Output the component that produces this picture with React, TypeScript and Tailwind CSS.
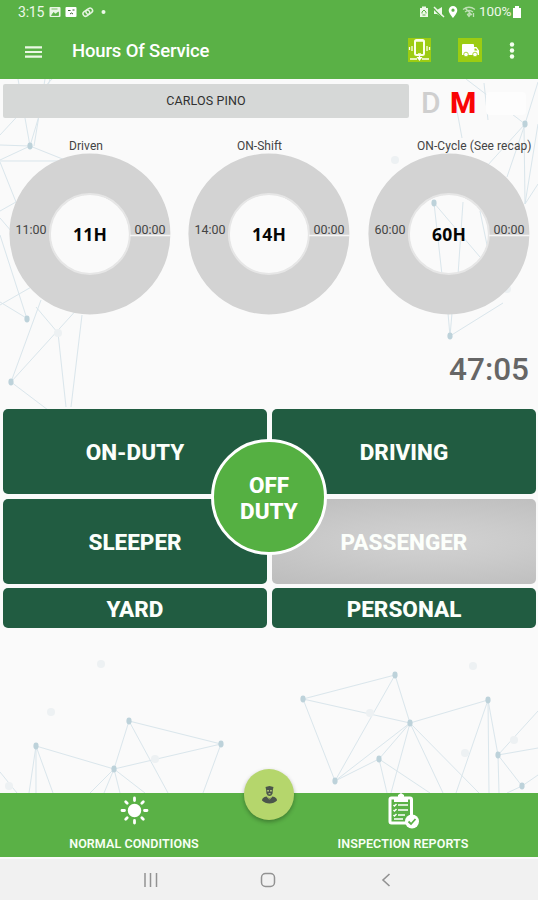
import React from "react";

type Point = [number, number];

const nodes: Point[] = [
  [30, 146], [27, 319], [11, 382], [36, 746], [129, 721], [221, 744], [114, 769],
  [303, 699], [395, 675], [410, 723], [488, 700], [335, 781], [379, 759], [498, 755],
  [522, 786], [434, 203], [450, 336], [525, 124],
];
const faintNodes: Point[] = [
  [58, 333], [51, 712], [101, 664], [155, 759], [370, 713], [473, 666], [514, 740],
  [395, 160], [507, 289], [465, 753], [9, 786],
];
const lines: [number, number, number, number][] = [
  [18, 79, 30, 146], [50, 79, 30, 146], [0, 145, 30, 146], [0, 160, 30, 146],
  [30, 146, 80, 166], [0, 161, 62, 161], [0, 162, 16, 202], [16, 202, 0, 211],
  [0, 218, 12, 232], [0, 235, 27, 319], [0, 305, 40, 282], [0, 302, 28, 319],
  [41, 300, 11, 382], [80, 306, 11, 382], [11, 382, 48, 410], [58, 333, 66, 407],
  [82, 315, 71, 407], [36, 307, 58, 333], [45, 79, 34, 146], [52, 79, 0, 135],
  [36, 746, 114, 769], [36, 746, 36, 793], [36, 746, 29, 793], [36, 746, 53, 793],
  [129, 721, 221, 744], [129, 721, 114, 769], [129, 721, 168, 793],
  [221, 744, 114, 769], [221, 744, 203, 793], [114, 769, 90, 793],
  [114, 769, 104, 793], [114, 769, 120, 793], [114, 769, 145, 793], [0, 772, 17, 793],
  [303, 699, 395, 675], [303, 699, 410, 723], [303, 699, 335, 781],
  [395, 675, 410, 723], [395, 675, 335, 781], [410, 723, 488, 700],
  [410, 723, 335, 781], [410, 723, 379, 759], [379, 759, 335, 781],
  [379, 759, 430, 793], [379, 759, 387, 793], [410, 723, 391, 793],
  [410, 723, 443, 793], [410, 723, 479, 793], [488, 700, 456, 793],
  [488, 700, 489, 793], [488, 700, 498, 755], [498, 755, 538, 711],
  [498, 755, 538, 748], [498, 755, 522, 786], [498, 755, 499, 793],
  [522, 786, 538, 775], [522, 786, 507, 793], [434, 203, 480, 257],
  [434, 203, 442, 275], [463, 202, 458, 275], [480, 211, 487, 245],
  [448, 313, 450, 336], [452, 313, 450, 336], [450, 336, 503, 303],
  [538, 124, 525, 204], [538, 184, 525, 204], [524, 125, 525, 204],
  [525, 124, 466, 79], [525, 124, 538, 82], [525, 124, 487, 166],
  [525, 124, 507, 177], [484, 83, 488, 120], [455, 100, 462, 138],
];

function Backdrop() {
  return (
    <svg className="absolute inset-0 h-full w-full" viewBox="0 79 538 714" fill="none" aria-hidden="true">
      <g stroke="#c5d9e3" strokeWidth="1" opacity=".6">
        {lines.map(([a, b, c, d], i) => <path key={i} d={`M${a} ${b}L${c} ${d}`} />)}
      </g>
      <g fill="#bdd2da">
        {nodes.map(([x, y], i) => <ellipse key={i} cx={x} cy={y} rx="2.6" ry="3.4" />)}
      </g>
      <g fill="#edf1f3">
        {faintNodes.map(([x, y], i) => <circle key={i} cx={x} cy={y} r="4" />)}
      </g>
    </svg>
  );
}

function Gauge({ label, start, hours, labelX, labelWidth }: {
  label: string; start: string; hours: string; labelX: number; labelWidth: number;
}) {
  return (
    <svg className="h-[184px] w-full overflow-visible" viewBox="0 0 179.33 184" fontFamily="Roboto, sans-serif">
      <text x={labelX} y="19.5" fontSize="12" fill="#444" textLength={labelWidth}>{label}</text>
      <circle cx="89.9" cy="103" r="60" fill="none" stroke="#d3d3d3" strokeWidth="41" />
      <circle cx="89.9" cy="103" r="40" fill="none" stroke="#e6e6e6" strokeWidth="2" />
      <path d="M130 104.5h41" stroke="#f5f5f5" strokeWidth="1.5" />
      <text x="15.5" y="103" fontSize="12.5" fill="#444" textLength="31">{start}</text>
      <text x="134.5" y="103" fontSize="12.5" fill="#444" textLength="31">00:00</text>
      <text x="73" y="110" fontFamily="Open Sans, sans-serif" fontSize="17.5" fontWeight="700" fill="#050505" textLength="34">{hours}</text>
    </svg>
  );
}

function DutyButton({ children, disabled = false }: { children: React.ReactNode; disabled?: boolean }) {
  return (
    <button
      className={`flex items-center justify-center rounded-[5px] pt-[2px] text-[22.5px] leading-none font-extrabold text-[#fcfffb] ${
        disabled ? "bg-[radial-gradient(ellipse_90%_60%_at_60%_50%,#d2d2d2_0%,#cbcbcb_40%,#bebebe_100%)]" : "bg-[#215c41]"
      }`}
    >
      {children}
    </button>
  );
}

function StatusBar() {
  return (
    <div className="flex h-6 items-center justify-between pr-[17px] pl-[18px] text-[14px] leading-none text-[#edf8e9]">
      <div className="flex items-center">
        <span className="w-[31px] tracking-[-0.2px]">3:15</span>
        <svg className="h-3 w-[60px]" viewBox="0 0 60 12" fill="none">
          <rect x="0.500" y="1" width="11" height="10" rx="1" fill="#e9f5e5" />
          <path d="M2.500 3h6M2.500 9.500l2-3 2 1.500 3-2v3.500z" stroke="#5ab146" fill="#5ab146" strokeWidth=".8" />
          <rect x="16.500" y="1" width="11" height="10" rx="1" fill="#fff" />
          <path d="M19 4.500h2.500M23.500 4h2M21 8l1.500-1 1.500 1" stroke="#35612a" />
          <g stroke="#e4f3df" strokeWidth="1.5" transform="rotate(-35 39 6)">
            <rect x="33.5" y="3.5" width="7" height="5" rx="2.5" />
            <rect x="37" y="3.5" width="7" height="5" rx="2.5" />
          </g>
          <circle cx="54.5" cy="6" r="2" fill="#edf8e9" />
        </svg>
      </div>
      <div className="flex items-center">
        <svg className="mr-[3px] h-3 w-[57px]" viewBox="0 0 57 12" fill="none">
          <path d="M1 2h2V.5h4V2h2v9H1z" fill="#edf8e9" />
          <path d="M3 7.500V6l2-2 2 2v1.500M3.500 9h3" stroke="#5ab146" />
          <path d="M15 4h3l5-3v10l-5-3h-3z" fill="#edf8e9" />
          <path d="m14 2 9 9" stroke="#5ab146" strokeWidth="1.500" />
          <path d="m15 1 10 10" stroke="#edf8e9" strokeWidth="1.500" />
          <path fillRule="evenodd" d="M34 0a4.300 4.300 0 0 0-4.300 4.300c0 3 4.300 7.700 4.300 7.700s4.300-4.700 4.300-7.700A4.300 4.300 0 0 0 34 0m0 2.600a1.600 1.600 0 1 1 0 3.200 1.600 1.600 0 0 1 0-3.200" fill="#fff" />
          <path d="M44 3.500q6-4.500 12 0M46 6q4-3 8 0M48.500 8.500q1.500-1.500 3 0L50 10.500zM46 2l7 7M54.500 7v4" stroke="#bfe0b6" strokeWidth="1.300" />
        </svg>
        <span className="w-[34px] text-[13.5px] tracking-[-0.1px]">100%</span>
        <svg className="h-3 w-2" viewBox="0 0 8 12"><path fill="#fff" d="M0 2h2V0h4v2h2v10H0z" /></svg>
      </div>
    </div>
  );
}

export default function App() {
  return (
    <div className="flex h-[900px] w-[538px] flex-col overflow-hidden bg-[#fafafa] font-[Roboto,sans-serif]">
      <header className="h-[79px] shrink-0 bg-[#5ab146] text-white">
        <StatusBar />
        <div className="flex h-[55px] items-center pr-6 pl-[25px]">
          <svg className="h-3 w-[17px]" viewBox="0 0 17 12"><path d="M0 1.3h17M0 6h17M0 10.7h17" stroke="#eaf8e4" strokeWidth="2.2" /></svg>
          <h1 className="ml-[30px] text-[18.5px] leading-none font-medium tracking-[-0.15px]">Hours Of Service</h1>
          <div className="ml-auto flex items-center pb-1">
            <svg className="h-6 w-[23px] bg-[#9ccc12]" viewBox="0 0 23 24" fill="none">
              <rect x="7" y="2" width="9" height="15" rx="1.5" stroke="#fbffe9" strokeWidth="2" />
              <path d="M8 3h7M10 16h3M4 8v5M19 8v5M1.5 9v3M21.5 9v3M2 21h7M14 21h7M11.5 17v4" stroke="#fbffe9" strokeWidth="1.3" />
              <path d="m8.5 19 3 4 3-4z" fill="#fff" />
            </svg>
            <svg className="ml-[27px] h-6 w-6 bg-[#9ccc12]" viewBox="0 0 24 24">
              <path d="M5 6h10a1 1 0 0 1 1 1v2h2.500l2.500 3.500V17H4V7a1 1 0 0 1 1-1" fill="#fff" />
              <path d="M16.500 10.500v2h3l-1.500-2z" fill="#9ccc12" />
              <g fill="#fff" stroke="#9ccc12" strokeWidth=".8"><circle cx="8" cy="16.500" r="2.300" /><circle cx="17" cy="16.500" r="2.300" /></g>
            </svg>
            <svg className="ml-7 h-4 w-1 overflow-visible" viewBox="0 0 4 16" fill="#f4fff0"><circle cx="2" cy="2.500" r="2.200" /><circle cx="2" cy="8.500" r="2.200" /><circle cx="2" cy="14.500" r="2.200" /></svg>
          </div>
        </div>
      </header>

      <main className="relative h-[714px] shrink-0">
        <Backdrop />
        <div className="relative flex h-full flex-col">
          <div className="flex h-[52px] items-start pt-[5px] pl-[3px]">
            <div className="flex h-[34px] w-[406px] items-center justify-center rounded-[2px] bg-[#d6d8d7] text-[12.5px] tracking-[0.1px] text-[#303030]">CARLOS PINO</div>
            <div className="flex h-[34px] items-center pt-1 pl-3 text-[30px] leading-none font-bold">
              <span className="w-[29px] font-medium text-[#cfcfcf]">D</span>
              <span className="w-[36px] font-extrabold text-[#f90505]">M</span>
              <span className="h-[23px] w-[40px] rounded bg-[#fdfdfd]" />
            </div>
          </div>
          <section className="grid h-[184px] grid-cols-3">
            <Gauge label="Driven" start="11:00" hours="11H" labelX={69} labelWidth={34} />
            <Gauge label="ON-Shift" start="14:00" hours="14H" labelX={58} labelWidth={45} />
            <Gauge label="ON-Cycle (See recap)" start="60:00" hours="60H" labelX={58} labelWidth={114.5} />
          </section>
          <div className="flex h-[94px] items-center justify-end pt-[16px] pr-[9px] text-[31.5px] font-medium text-[#666]">
            <span>47:05</span>
          </div>
          <section className="relative grid h-[219px] grid-cols-[264px_264px] grid-rows-[85px_85px_40px] gap-x-[5px] gap-y-[4.5px] pl-[3px]">
            <DutyButton>ON-DUTY</DutyButton>
            <DutyButton>DRIVING</DutyButton>
            <DutyButton>SLEEPER</DutyButton>
            <DutyButton disabled>PASSENGER</DutyButton>
            <DutyButton>YARD</DutyButton>
            <DutyButton>PERSONAL</DutyButton>
            <button className="absolute top-[30px] left-[211px] h-[116px] w-[116px] rounded-full border-[3px] border-white bg-[#55b042] pt-[2px] text-[22.5px] leading-[26px] font-extrabold text-white">
              OFF<br />DUTY
            </button>
          </section>
        </div>
      </main>

      <footer className="relative grid h-16 shrink-0 grid-cols-2 bg-[#5ab146] text-[12.5px] leading-none font-semibold tracking-[0.08px] text-[#f7fff4]">
        <div className="flex flex-col items-center pr-px">
          <svg className="mt-[3px] h-[29px] w-[29px]" viewBox="0 0 29 29" stroke="#fff" strokeWidth="3" strokeLinecap="round">
            <circle cx="14.5" cy="14.5" r="6" fill="#fff" strokeWidth="1.500" />
            <path d="M14.5 2v2.500M14.500 24.500V27M2 14.500h2.500M24.500 14.500H27M5.700 5.700l1.500 1.500M21.800 21.800l1.500 1.500M5.700 23.300l1.500-1.500M21.800 7.200l1.500-1.500" strokeWidth="2.800" />
          </svg>
          <span className="mt-[13px]">NORMAL CONDITIONS</span>
        </div>
        <div className="flex flex-col items-center pr-px">
          <svg className="h-[36px] w-[31px]" viewBox="0 0 31 36" fill="none">
            <rect x="2" y="5" width="21.5" height="25" rx="1.5" stroke="#fff" strokeWidth="3" />
            <path d="M6 9V4h4V2l3-2 3 2v2h4v5z" fill="#fff" />
            <path d="m5.5 12 1 1 2-2M10 12h10M5.5 17l1 1 2-2M10 17h10M5.5 22l1 1 2-2M10 22h7M6 26h9" stroke="#fff" strokeWidth="1.5" />
            <circle cx="24" cy="28.500" r="7" fill="#fff" />
            <path d="m20.500 28.500 2.500 2.500 4.500-5" stroke="#5ab146" strokeWidth="1.800" />
          </svg>
          <span className="mt-[9px]">INSPECTION REPORTS</span>
        </div>
        <button className="absolute top-[-24px] left-[244px] flex h-[51px] w-[50px] items-center justify-center rounded-full bg-[#b5d66c] shadow-[0_2px_4px_rgba(0,0,0,.3)]">
          <svg className="h-[18px] w-[15px]" viewBox="0 0 15 18" fill="#4b554b">
            <path d="M3.500 1 7.500 0l4 1-.7 3-.2 3.500Q9.500 10 7.500 10T4.400 7.500L4.200 4z" />
            <path d="M5.300 4h1.500v1.500H5.300zM8.200 4h1.500v1.500H8.200zM6.500 7.300h2v1h-2z" fill="#c5da85" />
            <path d="M4.500 10.500Q0 11.300 0 14.500 3 17.500 7.500 17.500T15 14.500q0-3.200-4.500-4L7.500 12.500z" />
            <path d="m5 10.800 2.500 2.500 2.500-2.500" fill="none" stroke="#a6bd70" strokeWidth=".8" />
          </svg>
        </button>
      </footer>

      <nav className="flex h-[43px] shrink-0 items-center border-t-2 border-[#fafafa] bg-[#f1f1f1] pt-[1px] pl-[144px]">
        <svg className="h-[14px] w-[14px]" viewBox="0 0 14 14"><path d="M1 0v14M6.500 0v14M12.500 0v14" stroke="#929292" strokeWidth="1.5" /></svg>
        <svg className="ml-[102px] h-4 w-4" viewBox="0 0 16 16"><rect x="1.500" y="1.500" width="13" height="13" rx="4" fill="none" stroke="#929292" strokeWidth="1.500" /></svg>
        <svg className="ml-[105px] h-[14px] w-[10px]" viewBox="0 0 10 14"><path d="M8.500 1 2 7l6.500 6" fill="none" stroke="#929292" strokeWidth="1.600" /></svg>
      </nav>
    </div>
  );
}
